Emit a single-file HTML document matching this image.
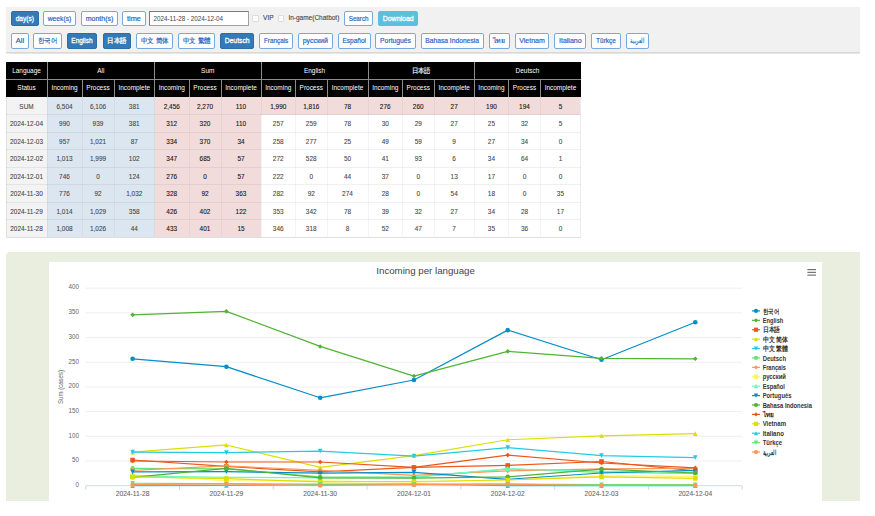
<!DOCTYPE html>
<html><head><meta charset="utf-8"><style>
*{margin:0;padding:0;box-sizing:border-box}
html,body{width:875px;height:516px;overflow:hidden;background:#fff;font-family:"Liberation Sans", sans-serif;}
.a{position:absolute}
.tb{position:absolute;left:6px;top:7px;width:854px;height:45.5px;background:#f1f1f1;border-bottom:1px solid #d8d8d8;box-shadow:0 0.8px 1px rgba(0,0,0,0.10)}
.b{position:absolute;height:15.2px;border:1px solid #74aadf;border-radius:2px;background:#fff;color:#2e6db4;font-size:6.7px;line-height:13px;text-align:center;white-space:nowrap;overflow:hidden}
.b.on{background:#337ab7;border-color:#2e6da4;color:#fff}
.c{position:absolute;text-align:center;white-space:nowrap;overflow:hidden;font-size:6.5px;color:#555}
</style></head>
<body>
<div class="tb"></div>
<div class="b on" style="left:11px;top:11px;width:27.7px"></div>
<div class="b" style="left:43px;top:11px;width:33.0px"></div>
<div class="b" style="left:81px;top:11px;width:37.0px"></div>
<div class="b" style="left:122.3px;top:11px;width:23.3px"></div>
<div class="a" style="left:149px;top:11px;width:100px;height:15px;border:1px solid #a0a0a0;border-top-color:#7a7a7a;border-left-color:#7a7a7a;border-radius:1px;background:#fff;font-size:6.3px;line-height:13px;padding-left:3.5px;color:#444">2024-11-28 - 2024-12-04</div>
<div class="a" style="left:252.3px;top:15.3px;width:6.4px;height:6.6px;border:1px solid #dcdcdc;border-radius:1px;background:#fff"></div>
<div class="a" style="left:263px;top:14px;font-size:6.6px;line-height:8px;color:#444;-webkit-text-stroke:0.1px #444">VIP</div>
<div class="a" style="left:277.8px;top:15.3px;width:6.4px;height:6.6px;border:1px solid #dcdcdc;border-radius:1px;background:#fff"></div>
<div class="a" style="left:288.4px;top:14px;font-size:6.5px;line-height:8px;color:#444;-webkit-text-stroke:0.1px #444">In-game(Chatbot)</div>
<div class="b" style="left:344px;top:11px;width:29.3px"></div>
<div class="b" style="left:378px;top:11px;width:40.4px;background:#5bc0de;border-color:#5bc0de;color:#fff"></div>
<div class="b" style="left:11px;top:33.3px;height:15.5px;width:17.8px"></div>
<div class="b" style="left:33px;top:33.3px;height:15.5px;width:28.7px"></div>
<div class="b on" style="left:66.6px;top:33.3px;height:15.5px;width:30.7px"></div>
<div class="b on" style="left:102.5px;top:33.3px;height:15.5px;width:28.7px"></div>
<div class="b" style="left:136px;top:33.3px;height:15.5px;width:37.3px"></div>
<div class="b" style="left:178.1px;top:33.3px;height:15.5px;width:37.3px"></div>
<div class="b on" style="left:220px;top:33.3px;height:15.5px;width:34.3px"></div>
<div class="b" style="left:259.3px;top:33.3px;height:15.5px;width:33.7px"></div>
<div class="b" style="left:298.1px;top:33.3px;height:15.5px;width:34.5px"></div>
<div class="b" style="left:337.8px;top:33.3px;height:15.5px;width:32.9px"></div>
<div class="b" style="left:375.4px;top:33.3px;height:15.5px;width:40.3px"></div>
<div class="b" style="left:420.5px;top:33.3px;height:15.5px;width:63.2px"></div>
<div class="b" style="left:488.5px;top:33.3px;height:15.5px;width:21.4px"></div>
<div class="b" style="left:514.6px;top:33.3px;height:15.5px;width:34.8px"></div>
<div class="b" style="left:554.3px;top:33.3px;height:15.5px;width:32.0px"></div>
<div class="b" style="left:591.4px;top:33.3px;height:15.5px;width:29.3px"></div>
<div class="b" style="left:625.6px;top:33.3px;height:15.5px;width:23.1px"></div>
<div class="a" style="left:6px;top:62px;width:574.5px;height:35.04px;background:#000"></div>
<div class="a" style="left:6.00px;top:62.00px;width:41.00px;height:17.52px;background:#000"></div>
<div class="a" style="left:47.00px;top:62.00px;width:107.50px;height:17.52px;background:#000"></div>
<div class="a" style="left:154.50px;top:62.00px;width:106.50px;height:17.52px;background:#000"></div>
<div class="a" style="left:261.00px;top:62.00px;width:107.00px;height:17.52px;background:#000"></div>
<div class="a" style="left:368.00px;top:62.00px;width:106.30px;height:17.52px;background:#000"></div>
<div class="a" style="left:474.30px;top:62.00px;width:106.20px;height:17.52px;background:#000"></div>
<div class="a" style="left:6.00px;top:79.52px;width:41.00px;height:17.52px;background:#000"></div>
<div class="a" style="left:47.00px;top:79.52px;width:35.00px;height:17.52px;background:#000"></div>
<div class="a" style="left:82.00px;top:79.52px;width:32.00px;height:17.52px;background:#000"></div>
<div class="a" style="left:114.00px;top:79.52px;width:40.50px;height:17.52px;background:#000"></div>
<div class="a" style="left:154.50px;top:79.52px;width:34.50px;height:17.52px;background:#000"></div>
<div class="a" style="left:189.00px;top:79.52px;width:32.00px;height:17.52px;background:#000"></div>
<div class="a" style="left:221.00px;top:79.52px;width:40.00px;height:17.52px;background:#000"></div>
<div class="a" style="left:261.00px;top:79.52px;width:34.50px;height:17.52px;background:#000"></div>
<div class="a" style="left:295.50px;top:79.52px;width:31.50px;height:17.52px;background:#000"></div>
<div class="a" style="left:327.00px;top:79.52px;width:41.00px;height:17.52px;background:#000"></div>
<div class="a" style="left:368.00px;top:79.52px;width:34.50px;height:17.52px;background:#000"></div>
<div class="a" style="left:402.50px;top:79.52px;width:31.50px;height:17.52px;background:#000"></div>
<div class="a" style="left:434.00px;top:79.52px;width:40.30px;height:17.52px;background:#000"></div>
<div class="a" style="left:474.30px;top:79.52px;width:34.30px;height:17.52px;background:#000"></div>
<div class="a" style="left:508.60px;top:79.52px;width:31.80px;height:17.52px;background:#000"></div>
<div class="a" style="left:540.40px;top:79.52px;width:40.10px;height:17.52px;background:#000"></div>
<div class="a" style="left:6.00px;top:97.04px;width:41.00px;height:17.52px;background:#f3f3f3"></div>
<div class="a" style="left:47.00px;top:97.04px;width:35.00px;height:17.52px;background:#dce6f1"></div>
<div class="a" style="left:82.00px;top:97.04px;width:32.00px;height:17.52px;background:#dce6f1"></div>
<div class="a" style="left:114.00px;top:97.04px;width:40.50px;height:17.52px;background:#dce6f1"></div>
<div class="a" style="left:154.50px;top:97.04px;width:34.50px;height:17.52px;background:#f2dcdb"></div>
<div class="a" style="left:189.00px;top:97.04px;width:32.00px;height:17.52px;background:#f2dcdb"></div>
<div class="a" style="left:221.00px;top:97.04px;width:40.00px;height:17.52px;background:#f2dcdb"></div>
<div class="a" style="left:261.00px;top:97.04px;width:34.50px;height:17.52px;background:#f2dcdb"></div>
<div class="a" style="left:295.50px;top:97.04px;width:31.50px;height:17.52px;background:#f2dcdb"></div>
<div class="a" style="left:327.00px;top:97.04px;width:41.00px;height:17.52px;background:#f2dcdb"></div>
<div class="a" style="left:368.00px;top:97.04px;width:34.50px;height:17.52px;background:#f2dcdb"></div>
<div class="a" style="left:402.50px;top:97.04px;width:31.50px;height:17.52px;background:#f2dcdb"></div>
<div class="a" style="left:434.00px;top:97.04px;width:40.30px;height:17.52px;background:#f2dcdb"></div>
<div class="a" style="left:474.30px;top:97.04px;width:34.30px;height:17.52px;background:#f2dcdb"></div>
<div class="a" style="left:508.60px;top:97.04px;width:31.80px;height:17.52px;background:#f2dcdb"></div>
<div class="a" style="left:540.40px;top:97.04px;width:40.10px;height:17.52px;background:#f2dcdb"></div>
<div class="a" style="left:6.00px;top:114.56px;width:41.00px;height:17.52px;background:#f3f3f3"></div>
<div class="a" style="left:47.00px;top:114.56px;width:35.00px;height:17.52px;background:#dce6f1"></div>
<div class="a" style="left:82.00px;top:114.56px;width:32.00px;height:17.52px;background:#dce6f1"></div>
<div class="a" style="left:114.00px;top:114.56px;width:40.50px;height:17.52px;background:#dce6f1"></div>
<div class="a" style="left:154.50px;top:114.56px;width:34.50px;height:17.52px;background:#f2dcdb"></div>
<div class="a" style="left:189.00px;top:114.56px;width:32.00px;height:17.52px;background:#f2dcdb"></div>
<div class="a" style="left:221.00px;top:114.56px;width:40.00px;height:17.52px;background:#f2dcdb"></div>
<div class="a" style="left:261.00px;top:114.56px;width:34.50px;height:17.52px;background:#fff"></div>
<div class="a" style="left:295.50px;top:114.56px;width:31.50px;height:17.52px;background:#fff"></div>
<div class="a" style="left:327.00px;top:114.56px;width:41.00px;height:17.52px;background:#fff"></div>
<div class="a" style="left:368.00px;top:114.56px;width:34.50px;height:17.52px;background:#fff"></div>
<div class="a" style="left:402.50px;top:114.56px;width:31.50px;height:17.52px;background:#fff"></div>
<div class="a" style="left:434.00px;top:114.56px;width:40.30px;height:17.52px;background:#fff"></div>
<div class="a" style="left:474.30px;top:114.56px;width:34.30px;height:17.52px;background:#fff"></div>
<div class="a" style="left:508.60px;top:114.56px;width:31.80px;height:17.52px;background:#fff"></div>
<div class="a" style="left:540.40px;top:114.56px;width:40.10px;height:17.52px;background:#fff"></div>
<div class="a" style="left:6.00px;top:132.08px;width:41.00px;height:17.52px;background:#f3f3f3"></div>
<div class="a" style="left:47.00px;top:132.08px;width:35.00px;height:17.52px;background:#dce6f1"></div>
<div class="a" style="left:82.00px;top:132.08px;width:32.00px;height:17.52px;background:#dce6f1"></div>
<div class="a" style="left:114.00px;top:132.08px;width:40.50px;height:17.52px;background:#dce6f1"></div>
<div class="a" style="left:154.50px;top:132.08px;width:34.50px;height:17.52px;background:#f2dcdb"></div>
<div class="a" style="left:189.00px;top:132.08px;width:32.00px;height:17.52px;background:#f2dcdb"></div>
<div class="a" style="left:221.00px;top:132.08px;width:40.00px;height:17.52px;background:#f2dcdb"></div>
<div class="a" style="left:261.00px;top:132.08px;width:34.50px;height:17.52px;background:#fff"></div>
<div class="a" style="left:295.50px;top:132.08px;width:31.50px;height:17.52px;background:#fff"></div>
<div class="a" style="left:327.00px;top:132.08px;width:41.00px;height:17.52px;background:#fff"></div>
<div class="a" style="left:368.00px;top:132.08px;width:34.50px;height:17.52px;background:#fff"></div>
<div class="a" style="left:402.50px;top:132.08px;width:31.50px;height:17.52px;background:#fff"></div>
<div class="a" style="left:434.00px;top:132.08px;width:40.30px;height:17.52px;background:#fff"></div>
<div class="a" style="left:474.30px;top:132.08px;width:34.30px;height:17.52px;background:#fff"></div>
<div class="a" style="left:508.60px;top:132.08px;width:31.80px;height:17.52px;background:#fff"></div>
<div class="a" style="left:540.40px;top:132.08px;width:40.10px;height:17.52px;background:#fff"></div>
<div class="a" style="left:6.00px;top:149.60px;width:41.00px;height:17.52px;background:#f3f3f3"></div>
<div class="a" style="left:47.00px;top:149.60px;width:35.00px;height:17.52px;background:#dce6f1"></div>
<div class="a" style="left:82.00px;top:149.60px;width:32.00px;height:17.52px;background:#dce6f1"></div>
<div class="a" style="left:114.00px;top:149.60px;width:40.50px;height:17.52px;background:#dce6f1"></div>
<div class="a" style="left:154.50px;top:149.60px;width:34.50px;height:17.52px;background:#f2dcdb"></div>
<div class="a" style="left:189.00px;top:149.60px;width:32.00px;height:17.52px;background:#f2dcdb"></div>
<div class="a" style="left:221.00px;top:149.60px;width:40.00px;height:17.52px;background:#f2dcdb"></div>
<div class="a" style="left:261.00px;top:149.60px;width:34.50px;height:17.52px;background:#fff"></div>
<div class="a" style="left:295.50px;top:149.60px;width:31.50px;height:17.52px;background:#fff"></div>
<div class="a" style="left:327.00px;top:149.60px;width:41.00px;height:17.52px;background:#fff"></div>
<div class="a" style="left:368.00px;top:149.60px;width:34.50px;height:17.52px;background:#fff"></div>
<div class="a" style="left:402.50px;top:149.60px;width:31.50px;height:17.52px;background:#fff"></div>
<div class="a" style="left:434.00px;top:149.60px;width:40.30px;height:17.52px;background:#fff"></div>
<div class="a" style="left:474.30px;top:149.60px;width:34.30px;height:17.52px;background:#fff"></div>
<div class="a" style="left:508.60px;top:149.60px;width:31.80px;height:17.52px;background:#fff"></div>
<div class="a" style="left:540.40px;top:149.60px;width:40.10px;height:17.52px;background:#fff"></div>
<div class="a" style="left:6.00px;top:167.12px;width:41.00px;height:17.52px;background:#f3f3f3"></div>
<div class="a" style="left:47.00px;top:167.12px;width:35.00px;height:17.52px;background:#dce6f1"></div>
<div class="a" style="left:82.00px;top:167.12px;width:32.00px;height:17.52px;background:#dce6f1"></div>
<div class="a" style="left:114.00px;top:167.12px;width:40.50px;height:17.52px;background:#dce6f1"></div>
<div class="a" style="left:154.50px;top:167.12px;width:34.50px;height:17.52px;background:#f2dcdb"></div>
<div class="a" style="left:189.00px;top:167.12px;width:32.00px;height:17.52px;background:#f2dcdb"></div>
<div class="a" style="left:221.00px;top:167.12px;width:40.00px;height:17.52px;background:#f2dcdb"></div>
<div class="a" style="left:261.00px;top:167.12px;width:34.50px;height:17.52px;background:#fff"></div>
<div class="a" style="left:295.50px;top:167.12px;width:31.50px;height:17.52px;background:#fff"></div>
<div class="a" style="left:327.00px;top:167.12px;width:41.00px;height:17.52px;background:#fff"></div>
<div class="a" style="left:368.00px;top:167.12px;width:34.50px;height:17.52px;background:#fff"></div>
<div class="a" style="left:402.50px;top:167.12px;width:31.50px;height:17.52px;background:#fff"></div>
<div class="a" style="left:434.00px;top:167.12px;width:40.30px;height:17.52px;background:#fff"></div>
<div class="a" style="left:474.30px;top:167.12px;width:34.30px;height:17.52px;background:#fff"></div>
<div class="a" style="left:508.60px;top:167.12px;width:31.80px;height:17.52px;background:#fff"></div>
<div class="a" style="left:540.40px;top:167.12px;width:40.10px;height:17.52px;background:#fff"></div>
<div class="a" style="left:6.00px;top:184.64px;width:41.00px;height:17.52px;background:#f3f3f3"></div>
<div class="a" style="left:47.00px;top:184.64px;width:35.00px;height:17.52px;background:#dce6f1"></div>
<div class="a" style="left:82.00px;top:184.64px;width:32.00px;height:17.52px;background:#dce6f1"></div>
<div class="a" style="left:114.00px;top:184.64px;width:40.50px;height:17.52px;background:#dce6f1"></div>
<div class="a" style="left:154.50px;top:184.64px;width:34.50px;height:17.52px;background:#f2dcdb"></div>
<div class="a" style="left:189.00px;top:184.64px;width:32.00px;height:17.52px;background:#f2dcdb"></div>
<div class="a" style="left:221.00px;top:184.64px;width:40.00px;height:17.52px;background:#f2dcdb"></div>
<div class="a" style="left:261.00px;top:184.64px;width:34.50px;height:17.52px;background:#fff"></div>
<div class="a" style="left:295.50px;top:184.64px;width:31.50px;height:17.52px;background:#fff"></div>
<div class="a" style="left:327.00px;top:184.64px;width:41.00px;height:17.52px;background:#fff"></div>
<div class="a" style="left:368.00px;top:184.64px;width:34.50px;height:17.52px;background:#fff"></div>
<div class="a" style="left:402.50px;top:184.64px;width:31.50px;height:17.52px;background:#fff"></div>
<div class="a" style="left:434.00px;top:184.64px;width:40.30px;height:17.52px;background:#fff"></div>
<div class="a" style="left:474.30px;top:184.64px;width:34.30px;height:17.52px;background:#fff"></div>
<div class="a" style="left:508.60px;top:184.64px;width:31.80px;height:17.52px;background:#fff"></div>
<div class="a" style="left:540.40px;top:184.64px;width:40.10px;height:17.52px;background:#fff"></div>
<div class="a" style="left:6.00px;top:202.16px;width:41.00px;height:17.52px;background:#f3f3f3"></div>
<div class="a" style="left:47.00px;top:202.16px;width:35.00px;height:17.52px;background:#dce6f1"></div>
<div class="a" style="left:82.00px;top:202.16px;width:32.00px;height:17.52px;background:#dce6f1"></div>
<div class="a" style="left:114.00px;top:202.16px;width:40.50px;height:17.52px;background:#dce6f1"></div>
<div class="a" style="left:154.50px;top:202.16px;width:34.50px;height:17.52px;background:#f2dcdb"></div>
<div class="a" style="left:189.00px;top:202.16px;width:32.00px;height:17.52px;background:#f2dcdb"></div>
<div class="a" style="left:221.00px;top:202.16px;width:40.00px;height:17.52px;background:#f2dcdb"></div>
<div class="a" style="left:261.00px;top:202.16px;width:34.50px;height:17.52px;background:#fff"></div>
<div class="a" style="left:295.50px;top:202.16px;width:31.50px;height:17.52px;background:#fff"></div>
<div class="a" style="left:327.00px;top:202.16px;width:41.00px;height:17.52px;background:#fff"></div>
<div class="a" style="left:368.00px;top:202.16px;width:34.50px;height:17.52px;background:#fff"></div>
<div class="a" style="left:402.50px;top:202.16px;width:31.50px;height:17.52px;background:#fff"></div>
<div class="a" style="left:434.00px;top:202.16px;width:40.30px;height:17.52px;background:#fff"></div>
<div class="a" style="left:474.30px;top:202.16px;width:34.30px;height:17.52px;background:#fff"></div>
<div class="a" style="left:508.60px;top:202.16px;width:31.80px;height:17.52px;background:#fff"></div>
<div class="a" style="left:540.40px;top:202.16px;width:40.10px;height:17.52px;background:#fff"></div>
<div class="a" style="left:6.00px;top:219.68px;width:41.00px;height:17.52px;background:#f3f3f3"></div>
<div class="a" style="left:47.00px;top:219.68px;width:35.00px;height:17.52px;background:#dce6f1"></div>
<div class="a" style="left:82.00px;top:219.68px;width:32.00px;height:17.52px;background:#dce6f1"></div>
<div class="a" style="left:114.00px;top:219.68px;width:40.50px;height:17.52px;background:#dce6f1"></div>
<div class="a" style="left:154.50px;top:219.68px;width:34.50px;height:17.52px;background:#f2dcdb"></div>
<div class="a" style="left:189.00px;top:219.68px;width:32.00px;height:17.52px;background:#f2dcdb"></div>
<div class="a" style="left:221.00px;top:219.68px;width:40.00px;height:17.52px;background:#f2dcdb"></div>
<div class="a" style="left:261.00px;top:219.68px;width:34.50px;height:17.52px;background:#fff"></div>
<div class="a" style="left:295.50px;top:219.68px;width:31.50px;height:17.52px;background:#fff"></div>
<div class="a" style="left:327.00px;top:219.68px;width:41.00px;height:17.52px;background:#fff"></div>
<div class="a" style="left:368.00px;top:219.68px;width:34.50px;height:17.52px;background:#fff"></div>
<div class="a" style="left:402.50px;top:219.68px;width:31.50px;height:17.52px;background:#fff"></div>
<div class="a" style="left:434.00px;top:219.68px;width:40.30px;height:17.52px;background:#fff"></div>
<div class="a" style="left:474.30px;top:219.68px;width:34.30px;height:17.52px;background:#fff"></div>
<div class="a" style="left:508.60px;top:219.68px;width:31.80px;height:17.52px;background:#fff"></div>
<div class="a" style="left:540.40px;top:219.68px;width:40.10px;height:17.52px;background:#fff"></div>
<div class="a" style="left:46.50px;top:97.04px;width:1px;height:140.16px;background:rgba(0,0,0,0.045)"></div>
<div class="a" style="left:81.50px;top:97.04px;width:1px;height:140.16px;background:rgba(0,0,0,0.045)"></div>
<div class="a" style="left:113.50px;top:97.04px;width:1px;height:140.16px;background:rgba(0,0,0,0.045)"></div>
<div class="a" style="left:154.00px;top:97.04px;width:1px;height:140.16px;background:rgba(0,0,0,0.045)"></div>
<div class="a" style="left:188.50px;top:97.04px;width:1px;height:140.16px;background:rgba(0,0,0,0.045)"></div>
<div class="a" style="left:220.50px;top:97.04px;width:1px;height:140.16px;background:rgba(0,0,0,0.045)"></div>
<div class="a" style="left:260.50px;top:97.04px;width:1px;height:140.16px;background:rgba(0,0,0,0.045)"></div>
<div class="a" style="left:295.00px;top:97.04px;width:1px;height:140.16px;background:rgba(0,0,0,0.045)"></div>
<div class="a" style="left:326.50px;top:97.04px;width:1px;height:140.16px;background:rgba(0,0,0,0.045)"></div>
<div class="a" style="left:367.50px;top:97.04px;width:1px;height:140.16px;background:rgba(0,0,0,0.045)"></div>
<div class="a" style="left:402.00px;top:97.04px;width:1px;height:140.16px;background:rgba(0,0,0,0.045)"></div>
<div class="a" style="left:433.50px;top:97.04px;width:1px;height:140.16px;background:rgba(0,0,0,0.045)"></div>
<div class="a" style="left:473.80px;top:97.04px;width:1px;height:140.16px;background:rgba(0,0,0,0.045)"></div>
<div class="a" style="left:508.10px;top:97.04px;width:1px;height:140.16px;background:rgba(0,0,0,0.045)"></div>
<div class="a" style="left:539.90px;top:97.04px;width:1px;height:140.16px;background:rgba(0,0,0,0.045)"></div>
<div class="a" style="left:6px;top:114.06px;width:574.5px;height:1px;background:rgba(0,0,0,0.06)"></div>
<div class="a" style="left:6px;top:131.58px;width:574.5px;height:1px;background:rgba(0,0,0,0.06)"></div>
<div class="a" style="left:6px;top:149.10px;width:574.5px;height:1px;background:rgba(0,0,0,0.06)"></div>
<div class="a" style="left:6px;top:166.62px;width:574.5px;height:1px;background:rgba(0,0,0,0.06)"></div>
<div class="a" style="left:6px;top:184.14px;width:574.5px;height:1px;background:rgba(0,0,0,0.06)"></div>
<div class="a" style="left:6px;top:201.66px;width:574.5px;height:1px;background:rgba(0,0,0,0.06)"></div>
<div class="a" style="left:6px;top:219.18px;width:574.5px;height:1px;background:rgba(0,0,0,0.06)"></div>
<div class="a" style="left:6px;top:236.70px;width:574.5px;height:1px;background:rgba(0,0,0,0.06)"></div>
<div class="a" style="left:46.50px;top:62px;width:1px;height:35.04px;background:#8c8c8c"></div>
<div class="a" style="left:81.50px;top:79.52px;width:1px;height:17.52px;background:#8c8c8c"></div>
<div class="a" style="left:113.50px;top:79.52px;width:1px;height:17.52px;background:#8c8c8c"></div>
<div class="a" style="left:154.00px;top:62px;width:1px;height:35.04px;background:#8c8c8c"></div>
<div class="a" style="left:188.50px;top:79.52px;width:1px;height:17.52px;background:#8c8c8c"></div>
<div class="a" style="left:220.50px;top:79.52px;width:1px;height:17.52px;background:#8c8c8c"></div>
<div class="a" style="left:260.50px;top:62px;width:1px;height:35.04px;background:#8c8c8c"></div>
<div class="a" style="left:295.00px;top:79.52px;width:1px;height:17.52px;background:#8c8c8c"></div>
<div class="a" style="left:326.50px;top:79.52px;width:1px;height:17.52px;background:#8c8c8c"></div>
<div class="a" style="left:367.50px;top:62px;width:1px;height:35.04px;background:#8c8c8c"></div>
<div class="a" style="left:402.00px;top:79.52px;width:1px;height:17.52px;background:#8c8c8c"></div>
<div class="a" style="left:433.50px;top:79.52px;width:1px;height:17.52px;background:#8c8c8c"></div>
<div class="a" style="left:473.80px;top:62px;width:1px;height:35.04px;background:#8c8c8c"></div>
<div class="a" style="left:508.10px;top:79.52px;width:1px;height:17.52px;background:#8c8c8c"></div>
<div class="a" style="left:539.90px;top:79.52px;width:1px;height:17.52px;background:#8c8c8c"></div>
<div class="a" style="left:6px;top:79.02px;width:574.5px;height:1px;background:#8c8c8c"></div>
<div class="a" style="left:5.5px;top:97.04px;width:1px;height:140.16px;background:rgba(0,0,0,0.08)"></div>
<div class="a" style="left:580px;top:97.04px;width:1px;height:140.16px;background:rgba(0,0,0,0.08)"></div>
<div class="a" style="left:6px;top:236.70px;width:574.5px;height:1px;background:rgba(0,0,0,0.07)"></div>
<svg class="a" style="left:0;top:0" width="875" height="516" viewBox="0 0 875 516" font-family="Liberation Sans"><text x="26.50" y="73.30" text-anchor="middle" font-size="7.0" fill="#fff" textLength="28.69" lengthAdjust="spacingAndGlyphs">Language</text><text x="100.75" y="73.30" text-anchor="middle" font-size="7.0" fill="#fff" textLength="7.17" lengthAdjust="spacingAndGlyphs">All</text><text x="207.75" y="73.30" text-anchor="middle" font-size="7.0" fill="#fff" textLength="13.26" lengthAdjust="spacingAndGlyphs">Sum</text><text x="314.50" y="73.30" text-anchor="middle" font-size="7.0" fill="#fff" textLength="21.15" lengthAdjust="spacingAndGlyphs">English</text><text x="421.15" y="73.30" text-anchor="middle" font-size="7.4" fill="#fff" stroke="#fff" stroke-width="0.15" textLength="19.20" lengthAdjust="spacingAndGlyphs">日本語</text><text x="527.40" y="73.30" text-anchor="middle" font-size="7.0" fill="#fff" textLength="23.66" lengthAdjust="spacingAndGlyphs">Deutsch</text><text x="26.50" y="90.22" text-anchor="middle" font-size="7.0" fill="#fff" textLength="18.28" lengthAdjust="spacingAndGlyphs">Status</text><text x="64.50" y="90.22" text-anchor="middle" font-size="7.0" fill="#fff" textLength="26.17" lengthAdjust="spacingAndGlyphs">Incoming</text><text x="98.00" y="90.22" text-anchor="middle" font-size="7.0" fill="#fff" textLength="23.30" lengthAdjust="spacingAndGlyphs">Process</text><text x="134.25" y="90.22" text-anchor="middle" font-size="7.0" fill="#fff" textLength="31.55" lengthAdjust="spacingAndGlyphs">Incomplete</text><text x="171.75" y="90.22" text-anchor="middle" font-size="7.0" fill="#fff" textLength="26.17" lengthAdjust="spacingAndGlyphs">Incoming</text><text x="205.00" y="90.22" text-anchor="middle" font-size="7.0" fill="#fff" textLength="23.30" lengthAdjust="spacingAndGlyphs">Process</text><text x="241.00" y="90.22" text-anchor="middle" font-size="7.0" fill="#fff" textLength="31.55" lengthAdjust="spacingAndGlyphs">Incomplete</text><text x="278.25" y="90.22" text-anchor="middle" font-size="7.0" fill="#fff" textLength="26.17" lengthAdjust="spacingAndGlyphs">Incoming</text><text x="311.25" y="90.22" text-anchor="middle" font-size="7.0" fill="#fff" textLength="23.30" lengthAdjust="spacingAndGlyphs">Process</text><text x="347.50" y="90.22" text-anchor="middle" font-size="7.0" fill="#fff" textLength="31.55" lengthAdjust="spacingAndGlyphs">Incomplete</text><text x="385.25" y="90.22" text-anchor="middle" font-size="7.0" fill="#fff" textLength="26.17" lengthAdjust="spacingAndGlyphs">Incoming</text><text x="418.25" y="90.22" text-anchor="middle" font-size="7.0" fill="#fff" textLength="23.30" lengthAdjust="spacingAndGlyphs">Process</text><text x="454.15" y="90.22" text-anchor="middle" font-size="7.0" fill="#fff" textLength="31.55" lengthAdjust="spacingAndGlyphs">Incomplete</text><text x="491.45" y="90.22" text-anchor="middle" font-size="7.0" fill="#fff" textLength="26.17" lengthAdjust="spacingAndGlyphs">Incoming</text><text x="524.50" y="90.22" text-anchor="middle" font-size="7.0" fill="#fff" textLength="23.30" lengthAdjust="spacingAndGlyphs">Process</text><text x="560.45" y="90.22" text-anchor="middle" font-size="7.0" fill="#fff" textLength="31.55" lengthAdjust="spacingAndGlyphs">Incomplete</text><text x="26.50" y="108.74" text-anchor="middle" font-size="7.2" fill="#444" stroke="#444" stroke-width="0.08" textLength="14.33" lengthAdjust="spacingAndGlyphs">SUM</text><text x="64.50" y="108.74" text-anchor="middle" font-size="7.2" fill="#444" stroke="#444" stroke-width="0.08" textLength="16.14" lengthAdjust="spacingAndGlyphs">6,504</text><text x="98.00" y="108.74" text-anchor="middle" font-size="7.2" fill="#444" stroke="#444" stroke-width="0.08" textLength="16.14" lengthAdjust="spacingAndGlyphs">6,106</text><text x="134.25" y="108.74" text-anchor="middle" font-size="7.2" fill="#444" stroke="#444" stroke-width="0.08" textLength="10.76" lengthAdjust="spacingAndGlyphs">381</text><text x="171.75" y="108.74" text-anchor="middle" font-size="7.2" fill="#111" stroke="#111" stroke-width="0.1" textLength="16.14" lengthAdjust="spacingAndGlyphs">2,456</text><text x="205.00" y="108.74" text-anchor="middle" font-size="7.2" fill="#111" stroke="#111" stroke-width="0.1" textLength="16.14" lengthAdjust="spacingAndGlyphs">2,270</text><text x="241.00" y="108.74" text-anchor="middle" font-size="7.2" fill="#111" stroke="#111" stroke-width="0.1" textLength="10.28" lengthAdjust="spacingAndGlyphs">110</text><text x="278.25" y="108.74" text-anchor="middle" font-size="7.2" fill="#111" stroke="#111" stroke-width="0.1" textLength="16.14" lengthAdjust="spacingAndGlyphs">1,990</text><text x="311.25" y="108.74" text-anchor="middle" font-size="7.2" fill="#111" stroke="#111" stroke-width="0.1" textLength="16.14" lengthAdjust="spacingAndGlyphs">1,816</text><text x="347.50" y="108.74" text-anchor="middle" font-size="7.2" fill="#111" stroke="#111" stroke-width="0.1" textLength="7.17" lengthAdjust="spacingAndGlyphs">78</text><text x="385.25" y="108.74" text-anchor="middle" font-size="7.2" fill="#111" stroke="#111" stroke-width="0.1" textLength="10.76" lengthAdjust="spacingAndGlyphs">276</text><text x="418.25" y="108.74" text-anchor="middle" font-size="7.2" fill="#111" stroke="#111" stroke-width="0.1" textLength="10.76" lengthAdjust="spacingAndGlyphs">260</text><text x="454.15" y="108.74" text-anchor="middle" font-size="7.2" fill="#111" stroke="#111" stroke-width="0.1" textLength="7.17" lengthAdjust="spacingAndGlyphs">27</text><text x="491.45" y="108.74" text-anchor="middle" font-size="7.2" fill="#111" stroke="#111" stroke-width="0.1" textLength="10.76" lengthAdjust="spacingAndGlyphs">190</text><text x="524.50" y="108.74" text-anchor="middle" font-size="7.2" fill="#111" stroke="#111" stroke-width="0.1" textLength="10.76" lengthAdjust="spacingAndGlyphs">194</text><text x="560.45" y="108.74" text-anchor="middle" font-size="7.2" fill="#111" stroke="#111" stroke-width="0.1" textLength="3.59" lengthAdjust="spacingAndGlyphs">5</text><text x="26.50" y="126.26" text-anchor="middle" font-size="7.2" fill="#444" stroke="#444" stroke-width="0.08" textLength="32.99" lengthAdjust="spacingAndGlyphs">2024-12-04</text><text x="64.50" y="126.26" text-anchor="middle" font-size="7.2" fill="#444" stroke="#444" stroke-width="0.08" textLength="10.76" lengthAdjust="spacingAndGlyphs">990</text><text x="98.00" y="126.26" text-anchor="middle" font-size="7.2" fill="#444" stroke="#444" stroke-width="0.08" textLength="10.76" lengthAdjust="spacingAndGlyphs">939</text><text x="134.25" y="126.26" text-anchor="middle" font-size="7.2" fill="#444" stroke="#444" stroke-width="0.08" textLength="10.76" lengthAdjust="spacingAndGlyphs">381</text><text x="171.75" y="126.26" text-anchor="middle" font-size="7.2" fill="#111" stroke="#111" stroke-width="0.1" textLength="10.76" lengthAdjust="spacingAndGlyphs">312</text><text x="205.00" y="126.26" text-anchor="middle" font-size="7.2" fill="#111" stroke="#111" stroke-width="0.1" textLength="10.76" lengthAdjust="spacingAndGlyphs">320</text><text x="241.00" y="126.26" text-anchor="middle" font-size="7.2" fill="#111" stroke="#111" stroke-width="0.1" textLength="10.28" lengthAdjust="spacingAndGlyphs">110</text><text x="278.25" y="126.26" text-anchor="middle" font-size="7.2" fill="#444" stroke="#444" stroke-width="0.08" textLength="10.76" lengthAdjust="spacingAndGlyphs">257</text><text x="311.25" y="126.26" text-anchor="middle" font-size="7.2" fill="#444" stroke="#444" stroke-width="0.08" textLength="10.76" lengthAdjust="spacingAndGlyphs">259</text><text x="347.50" y="126.26" text-anchor="middle" font-size="7.2" fill="#444" stroke="#444" stroke-width="0.08" textLength="7.17" lengthAdjust="spacingAndGlyphs">78</text><text x="385.25" y="126.26" text-anchor="middle" font-size="7.2" fill="#444" stroke="#444" stroke-width="0.08" textLength="7.17" lengthAdjust="spacingAndGlyphs">30</text><text x="418.25" y="126.26" text-anchor="middle" font-size="7.2" fill="#444" stroke="#444" stroke-width="0.08" textLength="7.17" lengthAdjust="spacingAndGlyphs">29</text><text x="454.15" y="126.26" text-anchor="middle" font-size="7.2" fill="#444" stroke="#444" stroke-width="0.08" textLength="7.17" lengthAdjust="spacingAndGlyphs">27</text><text x="491.45" y="126.26" text-anchor="middle" font-size="7.2" fill="#444" stroke="#444" stroke-width="0.08" textLength="7.17" lengthAdjust="spacingAndGlyphs">25</text><text x="524.50" y="126.26" text-anchor="middle" font-size="7.2" fill="#444" stroke="#444" stroke-width="0.08" textLength="7.17" lengthAdjust="spacingAndGlyphs">32</text><text x="560.45" y="126.26" text-anchor="middle" font-size="7.2" fill="#444" stroke="#444" stroke-width="0.08" textLength="3.59" lengthAdjust="spacingAndGlyphs">5</text><text x="26.50" y="143.78" text-anchor="middle" font-size="7.2" fill="#444" stroke="#444" stroke-width="0.08" textLength="32.99" lengthAdjust="spacingAndGlyphs">2024-12-03</text><text x="64.50" y="143.78" text-anchor="middle" font-size="7.2" fill="#444" stroke="#444" stroke-width="0.08" textLength="10.76" lengthAdjust="spacingAndGlyphs">957</text><text x="98.00" y="143.78" text-anchor="middle" font-size="7.2" fill="#444" stroke="#444" stroke-width="0.08" textLength="16.14" lengthAdjust="spacingAndGlyphs">1,021</text><text x="134.25" y="143.78" text-anchor="middle" font-size="7.2" fill="#444" stroke="#444" stroke-width="0.08" textLength="7.17" lengthAdjust="spacingAndGlyphs">87</text><text x="171.75" y="143.78" text-anchor="middle" font-size="7.2" fill="#111" stroke="#111" stroke-width="0.1" textLength="10.76" lengthAdjust="spacingAndGlyphs">334</text><text x="205.00" y="143.78" text-anchor="middle" font-size="7.2" fill="#111" stroke="#111" stroke-width="0.1" textLength="10.76" lengthAdjust="spacingAndGlyphs">370</text><text x="241.00" y="143.78" text-anchor="middle" font-size="7.2" fill="#111" stroke="#111" stroke-width="0.1" textLength="7.17" lengthAdjust="spacingAndGlyphs">34</text><text x="278.25" y="143.78" text-anchor="middle" font-size="7.2" fill="#444" stroke="#444" stroke-width="0.08" textLength="10.76" lengthAdjust="spacingAndGlyphs">258</text><text x="311.25" y="143.78" text-anchor="middle" font-size="7.2" fill="#444" stroke="#444" stroke-width="0.08" textLength="10.76" lengthAdjust="spacingAndGlyphs">277</text><text x="347.50" y="143.78" text-anchor="middle" font-size="7.2" fill="#444" stroke="#444" stroke-width="0.08" textLength="7.17" lengthAdjust="spacingAndGlyphs">25</text><text x="385.25" y="143.78" text-anchor="middle" font-size="7.2" fill="#444" stroke="#444" stroke-width="0.08" textLength="7.17" lengthAdjust="spacingAndGlyphs">49</text><text x="418.25" y="143.78" text-anchor="middle" font-size="7.2" fill="#444" stroke="#444" stroke-width="0.08" textLength="7.17" lengthAdjust="spacingAndGlyphs">59</text><text x="454.15" y="143.78" text-anchor="middle" font-size="7.2" fill="#444" stroke="#444" stroke-width="0.08" textLength="3.59" lengthAdjust="spacingAndGlyphs">9</text><text x="491.45" y="143.78" text-anchor="middle" font-size="7.2" fill="#444" stroke="#444" stroke-width="0.08" textLength="7.17" lengthAdjust="spacingAndGlyphs">27</text><text x="524.50" y="143.78" text-anchor="middle" font-size="7.2" fill="#444" stroke="#444" stroke-width="0.08" textLength="7.17" lengthAdjust="spacingAndGlyphs">34</text><text x="560.45" y="143.78" text-anchor="middle" font-size="7.2" fill="#444" stroke="#444" stroke-width="0.08" textLength="3.59" lengthAdjust="spacingAndGlyphs">0</text><text x="26.50" y="161.30" text-anchor="middle" font-size="7.2" fill="#444" stroke="#444" stroke-width="0.08" textLength="32.99" lengthAdjust="spacingAndGlyphs">2024-12-02</text><text x="64.50" y="161.30" text-anchor="middle" font-size="7.2" fill="#444" stroke="#444" stroke-width="0.08" textLength="16.14" lengthAdjust="spacingAndGlyphs">1,013</text><text x="98.00" y="161.30" text-anchor="middle" font-size="7.2" fill="#444" stroke="#444" stroke-width="0.08" textLength="16.14" lengthAdjust="spacingAndGlyphs">1,999</text><text x="134.25" y="161.30" text-anchor="middle" font-size="7.2" fill="#444" stroke="#444" stroke-width="0.08" textLength="10.76" lengthAdjust="spacingAndGlyphs">102</text><text x="171.75" y="161.30" text-anchor="middle" font-size="7.2" fill="#111" stroke="#111" stroke-width="0.1" textLength="10.76" lengthAdjust="spacingAndGlyphs">347</text><text x="205.00" y="161.30" text-anchor="middle" font-size="7.2" fill="#111" stroke="#111" stroke-width="0.1" textLength="10.76" lengthAdjust="spacingAndGlyphs">685</text><text x="241.00" y="161.30" text-anchor="middle" font-size="7.2" fill="#111" stroke="#111" stroke-width="0.1" textLength="7.17" lengthAdjust="spacingAndGlyphs">57</text><text x="278.25" y="161.30" text-anchor="middle" font-size="7.2" fill="#444" stroke="#444" stroke-width="0.08" textLength="10.76" lengthAdjust="spacingAndGlyphs">272</text><text x="311.25" y="161.30" text-anchor="middle" font-size="7.2" fill="#444" stroke="#444" stroke-width="0.08" textLength="10.76" lengthAdjust="spacingAndGlyphs">528</text><text x="347.50" y="161.30" text-anchor="middle" font-size="7.2" fill="#444" stroke="#444" stroke-width="0.08" textLength="7.17" lengthAdjust="spacingAndGlyphs">50</text><text x="385.25" y="161.30" text-anchor="middle" font-size="7.2" fill="#444" stroke="#444" stroke-width="0.08" textLength="7.17" lengthAdjust="spacingAndGlyphs">41</text><text x="418.25" y="161.30" text-anchor="middle" font-size="7.2" fill="#444" stroke="#444" stroke-width="0.08" textLength="7.17" lengthAdjust="spacingAndGlyphs">93</text><text x="454.15" y="161.30" text-anchor="middle" font-size="7.2" fill="#444" stroke="#444" stroke-width="0.08" textLength="3.59" lengthAdjust="spacingAndGlyphs">6</text><text x="491.45" y="161.30" text-anchor="middle" font-size="7.2" fill="#444" stroke="#444" stroke-width="0.08" textLength="7.17" lengthAdjust="spacingAndGlyphs">34</text><text x="524.50" y="161.30" text-anchor="middle" font-size="7.2" fill="#444" stroke="#444" stroke-width="0.08" textLength="7.17" lengthAdjust="spacingAndGlyphs">64</text><text x="560.45" y="161.30" text-anchor="middle" font-size="7.2" fill="#444" stroke="#444" stroke-width="0.08" textLength="3.59" lengthAdjust="spacingAndGlyphs">1</text><text x="26.50" y="178.82" text-anchor="middle" font-size="7.2" fill="#444" stroke="#444" stroke-width="0.08" textLength="32.99" lengthAdjust="spacingAndGlyphs">2024-12-01</text><text x="64.50" y="178.82" text-anchor="middle" font-size="7.2" fill="#444" stroke="#444" stroke-width="0.08" textLength="10.76" lengthAdjust="spacingAndGlyphs">746</text><text x="98.00" y="178.82" text-anchor="middle" font-size="7.2" fill="#444" stroke="#444" stroke-width="0.08" textLength="3.59" lengthAdjust="spacingAndGlyphs">0</text><text x="134.25" y="178.82" text-anchor="middle" font-size="7.2" fill="#444" stroke="#444" stroke-width="0.08" textLength="10.76" lengthAdjust="spacingAndGlyphs">124</text><text x="171.75" y="178.82" text-anchor="middle" font-size="7.2" fill="#111" stroke="#111" stroke-width="0.1" textLength="10.76" lengthAdjust="spacingAndGlyphs">276</text><text x="205.00" y="178.82" text-anchor="middle" font-size="7.2" fill="#111" stroke="#111" stroke-width="0.1" textLength="3.59" lengthAdjust="spacingAndGlyphs">0</text><text x="241.00" y="178.82" text-anchor="middle" font-size="7.2" fill="#111" stroke="#111" stroke-width="0.1" textLength="7.17" lengthAdjust="spacingAndGlyphs">57</text><text x="278.25" y="178.82" text-anchor="middle" font-size="7.2" fill="#444" stroke="#444" stroke-width="0.08" textLength="10.76" lengthAdjust="spacingAndGlyphs">222</text><text x="311.25" y="178.82" text-anchor="middle" font-size="7.2" fill="#444" stroke="#444" stroke-width="0.08" textLength="3.59" lengthAdjust="spacingAndGlyphs">0</text><text x="347.50" y="178.82" text-anchor="middle" font-size="7.2" fill="#444" stroke="#444" stroke-width="0.08" textLength="7.17" lengthAdjust="spacingAndGlyphs">44</text><text x="385.25" y="178.82" text-anchor="middle" font-size="7.2" fill="#444" stroke="#444" stroke-width="0.08" textLength="7.17" lengthAdjust="spacingAndGlyphs">37</text><text x="418.25" y="178.82" text-anchor="middle" font-size="7.2" fill="#444" stroke="#444" stroke-width="0.08" textLength="3.59" lengthAdjust="spacingAndGlyphs">0</text><text x="454.15" y="178.82" text-anchor="middle" font-size="7.2" fill="#444" stroke="#444" stroke-width="0.08" textLength="7.17" lengthAdjust="spacingAndGlyphs">13</text><text x="491.45" y="178.82" text-anchor="middle" font-size="7.2" fill="#444" stroke="#444" stroke-width="0.08" textLength="7.17" lengthAdjust="spacingAndGlyphs">17</text><text x="524.50" y="178.82" text-anchor="middle" font-size="7.2" fill="#444" stroke="#444" stroke-width="0.08" textLength="3.59" lengthAdjust="spacingAndGlyphs">0</text><text x="560.45" y="178.82" text-anchor="middle" font-size="7.2" fill="#444" stroke="#444" stroke-width="0.08" textLength="3.59" lengthAdjust="spacingAndGlyphs">0</text><text x="26.50" y="196.34" text-anchor="middle" font-size="7.2" fill="#444" stroke="#444" stroke-width="0.08" textLength="32.51" lengthAdjust="spacingAndGlyphs">2024-11-30</text><text x="64.50" y="196.34" text-anchor="middle" font-size="7.2" fill="#444" stroke="#444" stroke-width="0.08" textLength="10.76" lengthAdjust="spacingAndGlyphs">776</text><text x="98.00" y="196.34" text-anchor="middle" font-size="7.2" fill="#444" stroke="#444" stroke-width="0.08" textLength="7.17" lengthAdjust="spacingAndGlyphs">92</text><text x="134.25" y="196.34" text-anchor="middle" font-size="7.2" fill="#444" stroke="#444" stroke-width="0.08" textLength="16.14" lengthAdjust="spacingAndGlyphs">1,032</text><text x="171.75" y="196.34" text-anchor="middle" font-size="7.2" fill="#111" stroke="#111" stroke-width="0.1" textLength="10.76" lengthAdjust="spacingAndGlyphs">328</text><text x="205.00" y="196.34" text-anchor="middle" font-size="7.2" fill="#111" stroke="#111" stroke-width="0.1" textLength="7.17" lengthAdjust="spacingAndGlyphs">92</text><text x="241.00" y="196.34" text-anchor="middle" font-size="7.2" fill="#111" stroke="#111" stroke-width="0.1" textLength="10.76" lengthAdjust="spacingAndGlyphs">363</text><text x="278.25" y="196.34" text-anchor="middle" font-size="7.2" fill="#444" stroke="#444" stroke-width="0.08" textLength="10.76" lengthAdjust="spacingAndGlyphs">282</text><text x="311.25" y="196.34" text-anchor="middle" font-size="7.2" fill="#444" stroke="#444" stroke-width="0.08" textLength="7.17" lengthAdjust="spacingAndGlyphs">92</text><text x="347.50" y="196.34" text-anchor="middle" font-size="7.2" fill="#444" stroke="#444" stroke-width="0.08" textLength="10.76" lengthAdjust="spacingAndGlyphs">274</text><text x="385.25" y="196.34" text-anchor="middle" font-size="7.2" fill="#444" stroke="#444" stroke-width="0.08" textLength="7.17" lengthAdjust="spacingAndGlyphs">28</text><text x="418.25" y="196.34" text-anchor="middle" font-size="7.2" fill="#444" stroke="#444" stroke-width="0.08" textLength="3.59" lengthAdjust="spacingAndGlyphs">0</text><text x="454.15" y="196.34" text-anchor="middle" font-size="7.2" fill="#444" stroke="#444" stroke-width="0.08" textLength="7.17" lengthAdjust="spacingAndGlyphs">54</text><text x="491.45" y="196.34" text-anchor="middle" font-size="7.2" fill="#444" stroke="#444" stroke-width="0.08" textLength="7.17" lengthAdjust="spacingAndGlyphs">18</text><text x="524.50" y="196.34" text-anchor="middle" font-size="7.2" fill="#444" stroke="#444" stroke-width="0.08" textLength="3.59" lengthAdjust="spacingAndGlyphs">0</text><text x="560.45" y="196.34" text-anchor="middle" font-size="7.2" fill="#444" stroke="#444" stroke-width="0.08" textLength="7.17" lengthAdjust="spacingAndGlyphs">35</text><text x="26.50" y="213.86" text-anchor="middle" font-size="7.2" fill="#444" stroke="#444" stroke-width="0.08" textLength="32.51" lengthAdjust="spacingAndGlyphs">2024-11-29</text><text x="64.50" y="213.86" text-anchor="middle" font-size="7.2" fill="#444" stroke="#444" stroke-width="0.08" textLength="16.14" lengthAdjust="spacingAndGlyphs">1,014</text><text x="98.00" y="213.86" text-anchor="middle" font-size="7.2" fill="#444" stroke="#444" stroke-width="0.08" textLength="16.14" lengthAdjust="spacingAndGlyphs">1,029</text><text x="134.25" y="213.86" text-anchor="middle" font-size="7.2" fill="#444" stroke="#444" stroke-width="0.08" textLength="10.76" lengthAdjust="spacingAndGlyphs">358</text><text x="171.75" y="213.86" text-anchor="middle" font-size="7.2" fill="#111" stroke="#111" stroke-width="0.1" textLength="10.76" lengthAdjust="spacingAndGlyphs">426</text><text x="205.00" y="213.86" text-anchor="middle" font-size="7.2" fill="#111" stroke="#111" stroke-width="0.1" textLength="10.76" lengthAdjust="spacingAndGlyphs">402</text><text x="241.00" y="213.86" text-anchor="middle" font-size="7.2" fill="#111" stroke="#111" stroke-width="0.1" textLength="10.76" lengthAdjust="spacingAndGlyphs">122</text><text x="278.25" y="213.86" text-anchor="middle" font-size="7.2" fill="#444" stroke="#444" stroke-width="0.08" textLength="10.76" lengthAdjust="spacingAndGlyphs">353</text><text x="311.25" y="213.86" text-anchor="middle" font-size="7.2" fill="#444" stroke="#444" stroke-width="0.08" textLength="10.76" lengthAdjust="spacingAndGlyphs">342</text><text x="347.50" y="213.86" text-anchor="middle" font-size="7.2" fill="#444" stroke="#444" stroke-width="0.08" textLength="7.17" lengthAdjust="spacingAndGlyphs">78</text><text x="385.25" y="213.86" text-anchor="middle" font-size="7.2" fill="#444" stroke="#444" stroke-width="0.08" textLength="7.17" lengthAdjust="spacingAndGlyphs">39</text><text x="418.25" y="213.86" text-anchor="middle" font-size="7.2" fill="#444" stroke="#444" stroke-width="0.08" textLength="7.17" lengthAdjust="spacingAndGlyphs">32</text><text x="454.15" y="213.86" text-anchor="middle" font-size="7.2" fill="#444" stroke="#444" stroke-width="0.08" textLength="7.17" lengthAdjust="spacingAndGlyphs">27</text><text x="491.45" y="213.86" text-anchor="middle" font-size="7.2" fill="#444" stroke="#444" stroke-width="0.08" textLength="7.17" lengthAdjust="spacingAndGlyphs">34</text><text x="524.50" y="213.86" text-anchor="middle" font-size="7.2" fill="#444" stroke="#444" stroke-width="0.08" textLength="7.17" lengthAdjust="spacingAndGlyphs">28</text><text x="560.45" y="213.86" text-anchor="middle" font-size="7.2" fill="#444" stroke="#444" stroke-width="0.08" textLength="7.17" lengthAdjust="spacingAndGlyphs">17</text><text x="26.50" y="231.38" text-anchor="middle" font-size="7.2" fill="#444" stroke="#444" stroke-width="0.08" textLength="32.51" lengthAdjust="spacingAndGlyphs">2024-11-28</text><text x="64.50" y="231.38" text-anchor="middle" font-size="7.2" fill="#444" stroke="#444" stroke-width="0.08" textLength="16.14" lengthAdjust="spacingAndGlyphs">1,008</text><text x="98.00" y="231.38" text-anchor="middle" font-size="7.2" fill="#444" stroke="#444" stroke-width="0.08" textLength="16.14" lengthAdjust="spacingAndGlyphs">1,026</text><text x="134.25" y="231.38" text-anchor="middle" font-size="7.2" fill="#444" stroke="#444" stroke-width="0.08" textLength="7.17" lengthAdjust="spacingAndGlyphs">44</text><text x="171.75" y="231.38" text-anchor="middle" font-size="7.2" fill="#111" stroke="#111" stroke-width="0.1" textLength="10.76" lengthAdjust="spacingAndGlyphs">433</text><text x="205.00" y="231.38" text-anchor="middle" font-size="7.2" fill="#111" stroke="#111" stroke-width="0.1" textLength="10.76" lengthAdjust="spacingAndGlyphs">401</text><text x="241.00" y="231.38" text-anchor="middle" font-size="7.2" fill="#111" stroke="#111" stroke-width="0.1" textLength="7.17" lengthAdjust="spacingAndGlyphs">15</text><text x="278.25" y="231.38" text-anchor="middle" font-size="7.2" fill="#444" stroke="#444" stroke-width="0.08" textLength="10.76" lengthAdjust="spacingAndGlyphs">346</text><text x="311.25" y="231.38" text-anchor="middle" font-size="7.2" fill="#444" stroke="#444" stroke-width="0.08" textLength="10.76" lengthAdjust="spacingAndGlyphs">318</text><text x="347.50" y="231.38" text-anchor="middle" font-size="7.2" fill="#444" stroke="#444" stroke-width="0.08" textLength="3.59" lengthAdjust="spacingAndGlyphs">8</text><text x="385.25" y="231.38" text-anchor="middle" font-size="7.2" fill="#444" stroke="#444" stroke-width="0.08" textLength="7.17" lengthAdjust="spacingAndGlyphs">52</text><text x="418.25" y="231.38" text-anchor="middle" font-size="7.2" fill="#444" stroke="#444" stroke-width="0.08" textLength="7.17" lengthAdjust="spacingAndGlyphs">47</text><text x="454.15" y="231.38" text-anchor="middle" font-size="7.2" fill="#444" stroke="#444" stroke-width="0.08" textLength="3.59" lengthAdjust="spacingAndGlyphs">7</text><text x="491.45" y="231.38" text-anchor="middle" font-size="7.2" fill="#444" stroke="#444" stroke-width="0.08" textLength="7.17" lengthAdjust="spacingAndGlyphs">35</text><text x="524.50" y="231.38" text-anchor="middle" font-size="7.2" fill="#444" stroke="#444" stroke-width="0.08" textLength="7.17" lengthAdjust="spacingAndGlyphs">36</text><text x="560.45" y="231.38" text-anchor="middle" font-size="7.2" fill="#444" stroke="#444" stroke-width="0.08" textLength="3.59" lengthAdjust="spacingAndGlyphs">0</text></svg>
<div class="a" style="left:6px;top:252px;width:854px;height:249px;background:#eaeedf;border-radius:4px 0 0 0"></div>
<div class="a" style="left:49px;top:261.5px;width:773px;height:239.5px;background:#fff"></div>
<svg class="a" style="left:0;top:0" width="875" height="516" viewBox="0 0 875 516">
<line x1="85.7" x2="742.2" y1="461.01" y2="461.01" stroke="#e6e6e6" stroke-width="0.7"/>
<text x="79" y="462.31" text-anchor="end" font-size="6.3" fill="#666" font-family="Liberation Sans">50</text>
<line x1="85.7" x2="742.2" y1="436.31" y2="436.31" stroke="#e6e6e6" stroke-width="0.7"/>
<text x="79" y="437.62" text-anchor="end" font-size="6.3" fill="#666" font-family="Liberation Sans">100</text>
<line x1="85.7" x2="742.2" y1="411.62" y2="411.62" stroke="#e6e6e6" stroke-width="0.7"/>
<text x="79" y="412.92" text-anchor="end" font-size="6.3" fill="#666" font-family="Liberation Sans">150</text>
<line x1="85.7" x2="742.2" y1="386.93" y2="386.93" stroke="#e6e6e6" stroke-width="0.7"/>
<text x="79" y="388.23" text-anchor="end" font-size="6.3" fill="#666" font-family="Liberation Sans">200</text>
<line x1="85.7" x2="742.2" y1="362.24" y2="362.24" stroke="#e6e6e6" stroke-width="0.7"/>
<text x="79" y="363.54" text-anchor="end" font-size="6.3" fill="#666" font-family="Liberation Sans">250</text>
<line x1="85.7" x2="742.2" y1="337.54" y2="337.54" stroke="#e6e6e6" stroke-width="0.7"/>
<text x="79" y="338.84" text-anchor="end" font-size="6.3" fill="#666" font-family="Liberation Sans">300</text>
<line x1="85.7" x2="742.2" y1="312.85" y2="312.85" stroke="#e6e6e6" stroke-width="0.7"/>
<text x="79" y="314.15" text-anchor="end" font-size="6.3" fill="#666" font-family="Liberation Sans">350</text>
<line x1="85.7" x2="742.2" y1="288.16" y2="288.16" stroke="#e6e6e6" stroke-width="0.7"/>
<text x="79" y="289.46" text-anchor="end" font-size="6.3" fill="#666" font-family="Liberation Sans">400</text>
<text x="79" y="487.00" text-anchor="end" font-size="6.3" fill="#666" font-family="Liberation Sans">0</text>
<line x1="85.7" x2="742.2" y1="485.7" y2="485.7" stroke="#c0d0e0" stroke-width="0.8"/>
<line x1="85.70" x2="85.70" y1="485.7" y2="489.8" stroke="#c0d0e0" stroke-width="0.8"/>
<line x1="179.49" x2="179.49" y1="485.7" y2="489.8" stroke="#c0d0e0" stroke-width="0.8"/>
<line x1="273.27" x2="273.27" y1="485.7" y2="489.8" stroke="#c0d0e0" stroke-width="0.8"/>
<line x1="367.06" x2="367.06" y1="485.7" y2="489.8" stroke="#c0d0e0" stroke-width="0.8"/>
<line x1="460.84" x2="460.84" y1="485.7" y2="489.8" stroke="#c0d0e0" stroke-width="0.8"/>
<line x1="554.63" x2="554.63" y1="485.7" y2="489.8" stroke="#c0d0e0" stroke-width="0.8"/>
<line x1="648.42" x2="648.42" y1="485.7" y2="489.8" stroke="#c0d0e0" stroke-width="0.8"/>
<line x1="742.20" x2="742.20" y1="485.7" y2="489.8" stroke="#c0d0e0" stroke-width="0.8"/>
<text x="132.59" y="495.5" text-anchor="middle" font-size="7" fill="#666" stroke="#666" stroke-width="0.08" font-family="Liberation Sans" textLength="33.8" lengthAdjust="spacingAndGlyphs">2024-11-28</text>
<text x="226.38" y="495.5" text-anchor="middle" font-size="7" fill="#666" stroke="#666" stroke-width="0.08" font-family="Liberation Sans" textLength="33.8" lengthAdjust="spacingAndGlyphs">2024-11-29</text>
<text x="320.17" y="495.5" text-anchor="middle" font-size="7" fill="#666" stroke="#666" stroke-width="0.08" font-family="Liberation Sans" textLength="33.8" lengthAdjust="spacingAndGlyphs">2024-11-30</text>
<text x="413.95" y="495.5" text-anchor="middle" font-size="7" fill="#666" stroke="#666" stroke-width="0.08" font-family="Liberation Sans" textLength="33.8" lengthAdjust="spacingAndGlyphs">2024-12-01</text>
<text x="507.74" y="495.5" text-anchor="middle" font-size="7" fill="#666" stroke="#666" stroke-width="0.08" font-family="Liberation Sans" textLength="33.8" lengthAdjust="spacingAndGlyphs">2024-12-02</text>
<text x="601.52" y="495.5" text-anchor="middle" font-size="7" fill="#666" stroke="#666" stroke-width="0.08" font-family="Liberation Sans" textLength="33.8" lengthAdjust="spacingAndGlyphs">2024-12-03</text>
<text x="695.31" y="495.5" text-anchor="middle" font-size="7" fill="#666" stroke="#666" stroke-width="0.08" font-family="Liberation Sans" textLength="33.8" lengthAdjust="spacingAndGlyphs">2024-12-04</text>
<text x="0" y="0" transform="translate(63.3,387) rotate(-90)" text-anchor="middle" font-size="6.8" fill="#777" stroke="#777" stroke-width="0.05" font-family="Liberation Sans" textLength="34" lengthAdjust="spacingAndGlyphs">Sum (cases)</text>
<text x="425.6" y="274.2" text-anchor="middle" font-size="9.7" fill="#444" font-family="Liberation Sans">Incoming per language</text>
<line x1="807.4" x2="816" y1="269.60" y2="269.60" stroke="#666" stroke-width="1.1"/>
<line x1="807.4" x2="816" y1="272.35" y2="272.35" stroke="#666" stroke-width="1.1"/>
<line x1="807.4" x2="816" y1="275.10" y2="275.10" stroke="#666" stroke-width="1.1"/>
<polyline points="132.59,358.78 226.38,366.68 320.17,397.79 413.95,380.02 507.74,330.14 601.52,359.77 695.31,322.24" fill="none" stroke="#058DC7" stroke-width="1.2" stroke-linejoin="round"/>
<circle cx="132.59" cy="358.78" r="2.3" fill="#058DC7"/>
<circle cx="226.38" cy="366.68" r="2.3" fill="#058DC7"/>
<circle cx="320.17" cy="397.79" r="2.3" fill="#058DC7"/>
<circle cx="413.95" cy="380.02" r="2.3" fill="#058DC7"/>
<circle cx="507.74" cy="330.14" r="2.3" fill="#058DC7"/>
<circle cx="601.52" cy="359.77" r="2.3" fill="#058DC7"/>
<circle cx="695.31" cy="322.24" r="2.3" fill="#058DC7"/>
<polyline points="132.59,314.83 226.38,311.37 320.17,346.43 413.95,376.07 507.74,351.37 601.52,358.29 695.31,358.78" fill="none" stroke="#50B432" stroke-width="1.2" stroke-linejoin="round"/>
<path d="M132.59 312.53L134.89 314.83L132.59 317.13L130.29 314.83Z" fill="#50B432"/>
<path d="M226.38 309.07L228.68 311.37L226.38 313.67L224.08 311.37Z" fill="#50B432"/>
<path d="M320.17 344.13L322.47 346.43L320.17 348.73L317.87 346.43Z" fill="#50B432"/>
<path d="M413.95 373.77L416.25 376.07L413.95 378.37L411.65 376.07Z" fill="#50B432"/>
<path d="M507.74 349.07L510.04 351.37L507.74 353.67L505.44 351.37Z" fill="#50B432"/>
<path d="M601.52 355.99L603.82 358.29L601.52 360.59L599.22 358.29Z" fill="#50B432"/>
<path d="M695.31 356.48L697.61 358.78L695.31 361.08L693.01 358.78Z" fill="#50B432"/>
<polyline points="132.59,460.02 226.38,466.44 320.17,471.87 413.95,467.43 507.74,465.45 601.52,461.50 695.31,470.88" fill="none" stroke="#ED561B" stroke-width="1.2" stroke-linejoin="round"/>
<rect x="130.29" y="457.72" width="4.6" height="4.6" fill="#ED561B"/>
<rect x="224.08" y="464.14" width="4.6" height="4.6" fill="#ED561B"/>
<rect x="317.87" y="469.57" width="4.6" height="4.6" fill="#ED561B"/>
<rect x="411.65" y="465.13" width="4.6" height="4.6" fill="#ED561B"/>
<rect x="505.44" y="463.15" width="4.6" height="4.6" fill="#ED561B"/>
<rect x="599.22" y="459.20" width="4.6" height="4.6" fill="#ED561B"/>
<rect x="693.01" y="468.58" width="4.6" height="4.6" fill="#ED561B"/>
<polyline points="132.59,452.12 226.38,444.96 320.17,467.43 413.95,455.58 507.74,439.77 601.52,435.82 695.31,433.60" fill="none" stroke="#DDDF00" stroke-width="1.2" stroke-linejoin="round"/>
<path d="M132.59 449.82L134.89 454.42L130.29 454.42Z" fill="#DDDF00"/>
<path d="M226.38 442.66L228.68 447.26L224.08 447.26Z" fill="#DDDF00"/>
<path d="M320.17 465.13L322.47 469.73L317.87 469.73Z" fill="#DDDF00"/>
<path d="M413.95 453.28L416.25 457.88L411.65 457.88Z" fill="#DDDF00"/>
<path d="M507.74 437.47L510.04 442.07L505.44 442.07Z" fill="#DDDF00"/>
<path d="M601.52 433.52L603.82 438.12L599.22 438.12Z" fill="#DDDF00"/>
<path d="M695.31 431.30L697.61 435.90L693.01 435.90Z" fill="#DDDF00"/>
<polyline points="132.59,452.12 226.38,452.61 320.17,451.13 413.95,456.07 507.74,447.67 601.52,455.58 695.31,457.55" fill="none" stroke="#24CBE5" stroke-width="1.2" stroke-linejoin="round"/>
<path d="M130.29 449.82L134.89 449.82L132.59 454.42Z" fill="#24CBE5"/>
<path d="M224.08 450.31L228.68 450.31L226.38 454.91Z" fill="#24CBE5"/>
<path d="M317.87 448.83L322.47 448.83L320.17 453.43Z" fill="#24CBE5"/>
<path d="M411.65 453.77L416.25 453.77L413.95 458.37Z" fill="#24CBE5"/>
<path d="M505.44 445.37L510.04 445.37L507.74 449.97Z" fill="#24CBE5"/>
<path d="M599.22 453.28L603.82 453.28L601.52 457.88Z" fill="#24CBE5"/>
<path d="M693.01 455.25L697.61 455.25L695.31 459.85Z" fill="#24CBE5"/>
<polyline points="132.59,468.42 226.38,468.91 320.17,476.81 413.95,477.30 507.74,468.91 601.52,472.37 695.31,473.35" fill="none" stroke="#64E572" stroke-width="1.2" stroke-linejoin="round"/>
<circle cx="132.59" cy="468.42" r="2.3" fill="#64E572"/>
<circle cx="226.38" cy="468.91" r="2.3" fill="#64E572"/>
<circle cx="320.17" cy="476.81" r="2.3" fill="#64E572"/>
<circle cx="413.95" cy="477.30" r="2.3" fill="#64E572"/>
<circle cx="507.74" cy="468.91" r="2.3" fill="#64E572"/>
<circle cx="601.52" cy="472.37" r="2.3" fill="#64E572"/>
<circle cx="695.31" cy="473.35" r="2.3" fill="#64E572"/>
<polyline points="132.59,470.39 226.38,465.95 320.17,470.39 413.95,475.33 507.74,470.88 601.52,468.91 695.31,468.42" fill="none" stroke="#FF9655" stroke-width="1.2" stroke-linejoin="round"/>
<path d="M132.59 468.09L134.89 470.39L132.59 472.69L130.29 470.39Z" fill="#FF9655"/>
<path d="M226.38 463.65L228.68 465.95L226.38 468.25L224.08 465.95Z" fill="#FF9655"/>
<path d="M320.17 468.09L322.47 470.39L320.17 472.69L317.87 470.39Z" fill="#FF9655"/>
<path d="M413.95 473.03L416.25 475.33L413.95 477.63L411.65 475.33Z" fill="#FF9655"/>
<path d="M507.74 468.58L510.04 470.88L507.74 473.18L505.44 470.88Z" fill="#FF9655"/>
<path d="M601.52 466.61L603.82 468.91L601.52 471.21L599.22 468.91Z" fill="#FF9655"/>
<path d="M695.31 466.12L697.61 468.42L695.31 470.72L693.01 468.42Z" fill="#FF9655"/>
<polyline points="132.59,474.84 226.38,480.76 320.17,480.76 413.95,482.24 507.74,479.77 601.52,475.82 695.31,476.32" fill="none" stroke="#FFF263" stroke-width="1.2" stroke-linejoin="round"/>
<rect x="130.29" y="472.54" width="4.6" height="4.6" fill="#FFF263"/>
<rect x="224.08" y="478.46" width="4.6" height="4.6" fill="#FFF263"/>
<rect x="317.87" y="478.46" width="4.6" height="4.6" fill="#FFF263"/>
<rect x="411.65" y="479.94" width="4.6" height="4.6" fill="#FFF263"/>
<rect x="505.44" y="477.47" width="4.6" height="4.6" fill="#FFF263"/>
<rect x="599.22" y="473.52" width="4.6" height="4.6" fill="#FFF263"/>
<rect x="693.01" y="474.02" width="4.6" height="4.6" fill="#FFF263"/>
<polyline points="132.59,475.82 226.38,477.30 320.17,477.80 413.95,476.81 507.74,468.91 601.52,471.38 695.31,472.37" fill="none" stroke="#6AF9C4" stroke-width="1.2" stroke-linejoin="round"/>
<path d="M132.59 473.52L134.89 478.12L130.29 478.12Z" fill="#6AF9C4"/>
<path d="M226.38 475.00L228.68 479.60L224.08 479.60Z" fill="#6AF9C4"/>
<path d="M320.17 475.50L322.47 480.10L317.87 480.10Z" fill="#6AF9C4"/>
<path d="M413.95 474.51L416.25 479.11L411.65 479.11Z" fill="#6AF9C4"/>
<path d="M507.74 466.61L510.04 471.21L505.44 471.21Z" fill="#6AF9C4"/>
<path d="M601.52 469.08L603.82 473.68L599.22 473.68Z" fill="#6AF9C4"/>
<path d="M695.31 470.07L697.61 474.67L693.01 474.67Z" fill="#6AF9C4"/>
<polyline points="132.59,471.87 226.38,471.63 320.17,473.06 413.95,472.37 507.74,479.28 601.52,473.01 695.31,470.39" fill="none" stroke="#058DC7" stroke-width="1.2" stroke-linejoin="round"/>
<path d="M130.29 469.57L134.89 469.57L132.59 474.17Z" fill="#058DC7"/>
<path d="M224.08 469.33L228.68 469.33L226.38 473.93Z" fill="#058DC7"/>
<path d="M317.87 470.76L322.47 470.76L320.17 475.36Z" fill="#058DC7"/>
<path d="M411.65 470.07L416.25 470.07L413.95 474.67Z" fill="#058DC7"/>
<path d="M505.44 476.98L510.04 476.98L507.74 481.58Z" fill="#058DC7"/>
<path d="M599.22 470.71L603.82 470.71L601.52 475.31Z" fill="#058DC7"/>
<path d="M693.01 468.09L697.61 468.09L695.31 472.69Z" fill="#058DC7"/>
<polyline points="132.59,477.30 226.38,468.42 320.17,477.80 413.95,478.05 507.74,476.81 601.52,469.16 695.31,473.01" fill="none" stroke="#50B432" stroke-width="1.2" stroke-linejoin="round"/>
<circle cx="132.59" cy="477.30" r="2.3" fill="#50B432"/>
<circle cx="226.38" cy="468.42" r="2.3" fill="#50B432"/>
<circle cx="320.17" cy="477.80" r="2.3" fill="#50B432"/>
<circle cx="413.95" cy="478.05" r="2.3" fill="#50B432"/>
<circle cx="507.74" cy="476.81" r="2.3" fill="#50B432"/>
<circle cx="601.52" cy="469.16" r="2.3" fill="#50B432"/>
<circle cx="695.31" cy="473.01" r="2.3" fill="#50B432"/>
<polyline points="132.59,461.01 226.38,462.00 320.17,462.00 413.95,467.43 507.74,455.08 601.52,462.98 695.31,467.92" fill="none" stroke="#ED561B" stroke-width="1.2" stroke-linejoin="round"/>
<path d="M132.59 458.71L134.89 461.01L132.59 463.31L130.29 461.01Z" fill="#ED561B"/>
<path d="M226.38 459.70L228.68 462.00L226.38 464.30L224.08 462.00Z" fill="#ED561B"/>
<path d="M320.17 459.70L322.47 462.00L320.17 464.30L317.87 462.00Z" fill="#ED561B"/>
<path d="M413.95 465.13L416.25 467.43L413.95 469.73L411.65 467.43Z" fill="#ED561B"/>
<path d="M507.74 452.78L510.04 455.08L507.74 457.38L505.44 455.08Z" fill="#ED561B"/>
<path d="M601.52 460.68L603.82 462.98L601.52 465.28L599.22 462.98Z" fill="#ED561B"/>
<path d="M695.31 465.62L697.61 467.92L695.31 470.22L693.01 467.92Z" fill="#ED561B"/>
<polyline points="132.59,476.81 226.38,478.54 320.17,481.90 413.95,481.50 507.74,480.02 601.52,476.91 695.31,478.39" fill="none" stroke="#DDDF00" stroke-width="1.2" stroke-linejoin="round"/>
<rect x="130.29" y="474.51" width="4.6" height="4.6" fill="#DDDF00"/>
<rect x="224.08" y="476.24" width="4.6" height="4.6" fill="#DDDF00"/>
<rect x="317.87" y="479.60" width="4.6" height="4.6" fill="#DDDF00"/>
<rect x="411.65" y="479.20" width="4.6" height="4.6" fill="#DDDF00"/>
<rect x="505.44" y="477.72" width="4.6" height="4.6" fill="#DDDF00"/>
<rect x="599.22" y="474.61" width="4.6" height="4.6" fill="#DDDF00"/>
<rect x="693.01" y="476.09" width="4.6" height="4.6" fill="#DDDF00"/>
<polyline points="132.59,485.70 226.38,485.45 320.17,484.71 413.95,484.22 507.74,485.70 601.52,485.70 695.31,485.70" fill="none" stroke="#24CBE5" stroke-width="1.2" stroke-linejoin="round"/>
<path d="M132.59 483.40L134.89 488.00L130.29 488.00Z" fill="#24CBE5"/>
<path d="M226.38 483.15L228.68 487.75L224.08 487.75Z" fill="#24CBE5"/>
<path d="M320.17 482.41L322.47 487.01L317.87 487.01Z" fill="#24CBE5"/>
<path d="M413.95 481.92L416.25 486.52L411.65 486.52Z" fill="#24CBE5"/>
<path d="M507.74 483.40L510.04 488.00L505.44 488.00Z" fill="#24CBE5"/>
<path d="M601.52 483.40L603.82 488.00L599.22 488.00Z" fill="#24CBE5"/>
<path d="M695.31 483.40L697.61 488.00L693.01 488.00Z" fill="#24CBE5"/>
<polyline points="132.59,483.23 226.38,483.72 320.17,484.22 413.95,484.22 507.74,484.22 601.52,484.71 695.31,484.71" fill="none" stroke="#64E572" stroke-width="1.2" stroke-linejoin="round"/>
<path d="M130.29 480.93L134.89 480.93L132.59 485.53Z" fill="#64E572"/>
<path d="M224.08 481.42L228.68 481.42L226.38 486.02Z" fill="#64E572"/>
<path d="M317.87 481.92L322.47 481.92L320.17 486.52Z" fill="#64E572"/>
<path d="M411.65 481.92L416.25 481.92L413.95 486.52Z" fill="#64E572"/>
<path d="M505.44 481.92L510.04 481.92L507.74 486.52Z" fill="#64E572"/>
<path d="M599.22 482.41L603.82 482.41L601.52 487.01Z" fill="#64E572"/>
<path d="M693.01 482.41L697.61 482.41L695.31 487.01Z" fill="#64E572"/>
<polyline points="132.59,484.71 226.38,484.02 320.17,485.40 413.95,484.71 507.74,484.22 601.52,485.50 695.31,485.40" fill="none" stroke="#FF9655" stroke-width="1.2" stroke-linejoin="round"/>
<circle cx="132.59" cy="484.71" r="2.3" fill="#FF9655"/>
<circle cx="226.38" cy="484.02" r="2.3" fill="#FF9655"/>
<circle cx="320.17" cy="485.40" r="2.3" fill="#FF9655"/>
<circle cx="413.95" cy="484.71" r="2.3" fill="#FF9655"/>
<circle cx="507.74" cy="484.22" r="2.3" fill="#FF9655"/>
<circle cx="601.52" cy="485.50" r="2.3" fill="#FF9655"/>
<circle cx="695.31" cy="485.40" r="2.3" fill="#FF9655"/>
<line x1="752" x2="760" y1="310.90" y2="310.90" stroke="#058DC7" stroke-width="1.2"/>
<circle cx="756.00" cy="310.90" r="2.1" fill="#058DC7"/>
<text x="762.7" y="313.50" font-size="6.9" font-weight="bold" fill="#333" font-family="Liberation Sans" textLength="16.3" lengthAdjust="spacingAndGlyphs">한국어</text>
<line x1="752" x2="760" y1="320.31" y2="320.31" stroke="#50B432" stroke-width="1.2"/>
<path d="M756.00 318.21L758.10 320.31L756.00 322.41L753.90 320.31Z" fill="#50B432"/>
<text x="762.7" y="322.91" font-size="6.9" font-weight="bold" fill="#333" font-family="Liberation Sans" textLength="20.6" lengthAdjust="spacingAndGlyphs">English</text>
<line x1="752" x2="760" y1="329.72" y2="329.72" stroke="#ED561B" stroke-width="1.2"/>
<rect x="753.90" y="327.62" width="4.2" height="4.2" fill="#ED561B"/>
<text x="762.7" y="332.32" font-size="6.9" font-weight="bold" fill="#333" font-family="Liberation Sans" textLength="17.5" lengthAdjust="spacingAndGlyphs">日本語</text>
<line x1="752" x2="760" y1="339.13" y2="339.13" stroke="#DDDF00" stroke-width="1.2"/>
<path d="M756.00 337.03L758.10 341.23L753.90 341.23Z" fill="#DDDF00"/>
<text x="762.7" y="341.73" font-size="6.9" font-weight="bold" fill="#333" font-family="Liberation Sans" textLength="25.6" lengthAdjust="spacingAndGlyphs">中文 简体</text>
<line x1="752" x2="760" y1="348.54" y2="348.54" stroke="#24CBE5" stroke-width="1.2"/>
<path d="M753.90 346.44L758.10 346.44L756.00 350.64Z" fill="#24CBE5"/>
<text x="762.7" y="351.14" font-size="6.9" font-weight="bold" fill="#333" font-family="Liberation Sans" textLength="25.6" lengthAdjust="spacingAndGlyphs">中文 繁體</text>
<line x1="752" x2="760" y1="357.95" y2="357.95" stroke="#64E572" stroke-width="1.2"/>
<circle cx="756.00" cy="357.95" r="2.1" fill="#64E572"/>
<text x="762.7" y="360.55" font-size="6.9" font-weight="bold" fill="#333" font-family="Liberation Sans" textLength="23.3" lengthAdjust="spacingAndGlyphs">Deutsch</text>
<line x1="752" x2="760" y1="367.36" y2="367.36" stroke="#FF9655" stroke-width="1.2"/>
<path d="M756.00 365.26L758.10 367.36L756.00 369.46L753.90 367.36Z" fill="#FF9655"/>
<text x="762.7" y="369.96" font-size="6.9" font-weight="bold" fill="#333" font-family="Liberation Sans" textLength="23.3" lengthAdjust="spacingAndGlyphs">Français</text>
<line x1="752" x2="760" y1="376.77" y2="376.77" stroke="#FFF263" stroke-width="1.2"/>
<rect x="753.90" y="374.67" width="4.2" height="4.2" fill="#FFF263"/>
<text x="762.7" y="379.37" font-size="6.9" font-weight="bold" fill="#333" font-family="Liberation Sans" textLength="23.3" lengthAdjust="spacingAndGlyphs">русский</text>
<line x1="752" x2="760" y1="386.18" y2="386.18" stroke="#6AF9C4" stroke-width="1.2"/>
<path d="M756.00 384.08L758.10 388.28L753.90 388.28Z" fill="#6AF9C4"/>
<text x="762.7" y="388.78" font-size="6.9" font-weight="bold" fill="#333" font-family="Liberation Sans" textLength="22.2" lengthAdjust="spacingAndGlyphs">Español</text>
<line x1="752" x2="760" y1="395.59" y2="395.59" stroke="#058DC7" stroke-width="1.2"/>
<path d="M753.90 393.49L758.10 393.49L756.00 397.69Z" fill="#058DC7"/>
<text x="762.7" y="398.19" font-size="6.9" font-weight="bold" fill="#333" font-family="Liberation Sans" textLength="28.7" lengthAdjust="spacingAndGlyphs">Português</text>
<line x1="752" x2="760" y1="405.00" y2="405.00" stroke="#50B432" stroke-width="1.2"/>
<circle cx="756.00" cy="405.00" r="2.1" fill="#50B432"/>
<text x="762.7" y="407.60" font-size="6.9" font-weight="bold" fill="#333" font-family="Liberation Sans" textLength="49.2" lengthAdjust="spacingAndGlyphs">Bahasa Indonesia</text>
<line x1="752" x2="760" y1="414.41" y2="414.41" stroke="#ED561B" stroke-width="1.2"/>
<path d="M756.00 412.31L758.10 414.41L756.00 416.51L753.90 414.41Z" fill="#ED561B"/>
<text x="762.7" y="417.01" font-size="6.9" font-weight="bold" fill="#333" font-family="Liberation Sans" textLength="11.3" lengthAdjust="spacingAndGlyphs">ไทย</text>
<line x1="752" x2="760" y1="423.82" y2="423.82" stroke="#DDDF00" stroke-width="1.2"/>
<rect x="753.90" y="421.72" width="4.2" height="4.2" fill="#DDDF00"/>
<text x="762.7" y="426.42" font-size="6.9" font-weight="bold" fill="#333" font-family="Liberation Sans" textLength="23.3" lengthAdjust="spacingAndGlyphs">Vietnam</text>
<line x1="752" x2="760" y1="433.23" y2="433.23" stroke="#24CBE5" stroke-width="1.2"/>
<path d="M756.00 431.13L758.10 435.33L753.90 435.33Z" fill="#24CBE5"/>
<text x="762.7" y="435.83" font-size="6.9" font-weight="bold" fill="#333" font-family="Liberation Sans" textLength="21.2" lengthAdjust="spacingAndGlyphs">Italiano</text>
<line x1="752" x2="760" y1="442.64" y2="442.64" stroke="#64E572" stroke-width="1.2"/>
<path d="M753.90 440.54L758.10 440.54L756.00 444.74Z" fill="#64E572"/>
<text x="762.7" y="445.24" font-size="6.9" font-weight="bold" fill="#333" font-family="Liberation Sans" textLength="19.4" lengthAdjust="spacingAndGlyphs">Türkçe</text>
<line x1="752" x2="760" y1="452.05" y2="452.05" stroke="#FF9655" stroke-width="1.2"/>
<circle cx="756.00" cy="452.05" r="2.1" fill="#FF9655"/>
<text x="762.7" y="454.65" font-size="6.9" font-weight="bold" fill="#333" font-family="Liberation Sans" textLength="13.2" lengthAdjust="spacingAndGlyphs">العربية</text>
</svg>
<svg class="a" style="left:0;top:0" width="875" height="516" viewBox="0 0 875 516" font-family="Liberation Sans"><text x="24.85" y="20.8" text-anchor="middle" font-size="6.9" font-weight="normal" fill="#fff" stroke="#fff" stroke-width="0.26" textLength="18.30" lengthAdjust="spacingAndGlyphs">day(s)</text><text x="59.50" y="20.8" text-anchor="middle" font-size="6.9" font-weight="normal" fill="#2462bd" stroke="#2462bd" stroke-width="0.18" textLength="23.60" lengthAdjust="spacingAndGlyphs">week(s)</text><text x="99.50" y="20.8" text-anchor="middle" font-size="6.9" font-weight="normal" fill="#2462bd" stroke="#2462bd" stroke-width="0.18" textLength="27.60" lengthAdjust="spacingAndGlyphs">month(s)</text><text x="133.95" y="20.8" text-anchor="middle" font-size="6.9" font-weight="normal" fill="#2462bd" stroke="#2462bd" stroke-width="0.18" textLength="13.90" lengthAdjust="spacingAndGlyphs">time</text><text x="358.65" y="20.8" text-anchor="middle" font-size="6.9" font-weight="normal" fill="#2462bd" stroke="#2462bd" stroke-width="0.18" textLength="19.90" lengthAdjust="spacingAndGlyphs">Search</text><text x="398.20" y="20.8" text-anchor="middle" font-size="6.9" font-weight="normal" fill="#fff" stroke="#fff" stroke-width="0.26" textLength="31.00" lengthAdjust="spacingAndGlyphs">Download</text><text x="19.90" y="43.2" text-anchor="middle" font-size="6.9" font-weight="normal" fill="#2462bd" stroke="#2462bd" stroke-width="0.18" textLength="8.40" lengthAdjust="spacingAndGlyphs">All</text><text x="47.35" y="43.2" text-anchor="middle" font-size="6.9" font-weight="normal" fill="#2462bd" stroke="#2462bd" stroke-width="0.18" textLength="19.30" lengthAdjust="spacingAndGlyphs">한국어</text><text x="81.95" y="43.2" text-anchor="middle" font-size="6.9" font-weight="normal" fill="#fff" stroke="#fff" stroke-width="0.26" textLength="21.30" lengthAdjust="spacingAndGlyphs">English</text><text x="116.85" y="43.2" text-anchor="middle" font-size="6.9" font-weight="normal" fill="#fff" stroke="#fff" stroke-width="0.26" textLength="19.30" lengthAdjust="spacingAndGlyphs">日本語</text><text x="154.65" y="43.2" text-anchor="middle" font-size="6.9" font-weight="normal" fill="#2462bd" stroke="#2462bd" stroke-width="0.18" textLength="27.90" lengthAdjust="spacingAndGlyphs">中文 简体</text><text x="196.75" y="43.2" text-anchor="middle" font-size="6.9" font-weight="normal" fill="#2462bd" stroke="#2462bd" stroke-width="0.18" textLength="27.90" lengthAdjust="spacingAndGlyphs">中文 繁體</text><text x="237.15" y="43.2" text-anchor="middle" font-size="6.9" font-weight="normal" fill="#fff" stroke="#fff" stroke-width="0.26" textLength="24.90" lengthAdjust="spacingAndGlyphs">Deutsch</text><text x="276.15" y="43.2" text-anchor="middle" font-size="6.9" font-weight="normal" fill="#2462bd" stroke="#2462bd" stroke-width="0.18" textLength="24.30" lengthAdjust="spacingAndGlyphs">Français</text><text x="315.35" y="43.2" text-anchor="middle" font-size="6.9" font-weight="normal" fill="#2462bd" stroke="#2462bd" stroke-width="0.18" textLength="25.10" lengthAdjust="spacingAndGlyphs">русский</text><text x="354.25" y="43.2" text-anchor="middle" font-size="6.9" font-weight="normal" fill="#2462bd" stroke="#2462bd" stroke-width="0.18" textLength="23.50" lengthAdjust="spacingAndGlyphs">Español</text><text x="395.55" y="43.2" text-anchor="middle" font-size="6.9" font-weight="normal" fill="#2462bd" stroke="#2462bd" stroke-width="0.18" textLength="30.90" lengthAdjust="spacingAndGlyphs">Português</text><text x="452.10" y="43.2" text-anchor="middle" font-size="6.9" font-weight="normal" fill="#2462bd" stroke="#2462bd" stroke-width="0.18" textLength="53.80" lengthAdjust="spacingAndGlyphs">Bahasa Indonesia</text><text x="499.20" y="43.2" text-anchor="middle" font-size="6.9" font-weight="normal" fill="#2462bd" stroke="#2462bd" stroke-width="0.18" textLength="12.00" lengthAdjust="spacingAndGlyphs">ไทย</text><text x="532.00" y="43.2" text-anchor="middle" font-size="6.9" font-weight="normal" fill="#2462bd" stroke="#2462bd" stroke-width="0.18" textLength="25.40" lengthAdjust="spacingAndGlyphs">Vietnam</text><text x="570.30" y="43.2" text-anchor="middle" font-size="6.9" font-weight="normal" fill="#2462bd" stroke="#2462bd" stroke-width="0.18" textLength="22.60" lengthAdjust="spacingAndGlyphs">Italiano</text><text x="606.05" y="43.2" text-anchor="middle" font-size="6.9" font-weight="normal" fill="#2462bd" stroke="#2462bd" stroke-width="0.18" textLength="19.90" lengthAdjust="spacingAndGlyphs">Türkçe</text><text x="637.15" y="43.2" text-anchor="middle" font-size="6.9" font-weight="normal" fill="#2462bd" stroke="#2462bd" stroke-width="0.18" textLength="13.70" lengthAdjust="spacingAndGlyphs">العربية</text></svg>
</body></html>
